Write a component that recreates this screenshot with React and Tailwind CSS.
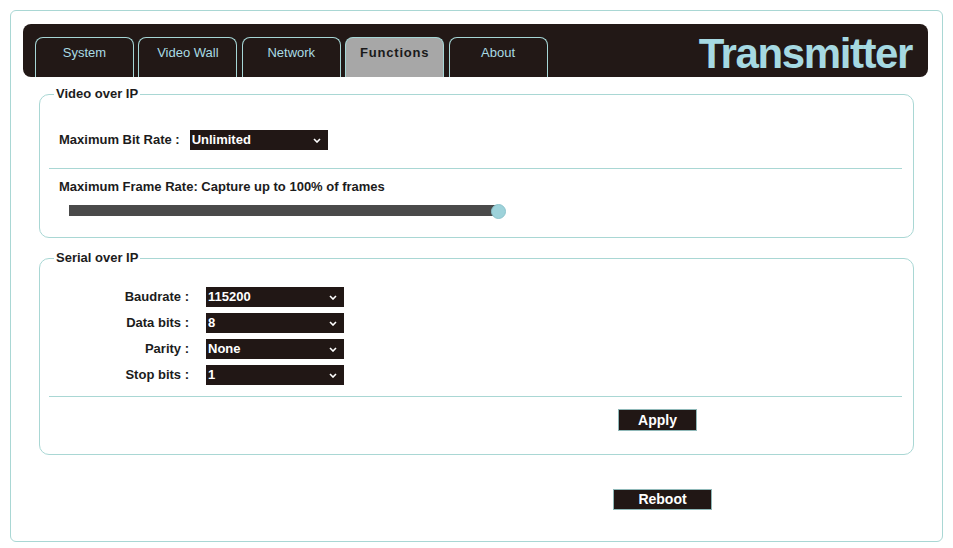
import { useState } from "react";

const tabs = ["System", "Video Wall", "Network", "Functions", "About"];

// small white chevron drawn over the native select
function Chevron() {
  return (
    <svg
      className="pointer-events-none absolute right-[7px] top-[8px]"
      width="8"
      height="5"
      viewBox="0 0 8 5"
    >
      <path d="M1 1 L4 4 L7 1" fill="none" stroke="#ffffff" strokeWidth="1.6" />
    </svg>
  );
}

function DarkSelect({ value, options, onChange }) {
  return (
    <div className="relative h-[20px] w-[138px]">
      <select
        value={value}
        onChange={(e) => onChange(e.target.value)}
        className="block h-[20px] w-[138px] appearance-none bg-[#211715] pl-[2px] text-[13px] font-bold leading-[20px] text-white outline-none"
      >
        {options.map((o) => (
          <option key={o} value={o}>
            {o}
          </option>
        ))}
      </select>
      <Chevron />
    </div>
  );
}

export default function App() {
  const [active, setActive] = useState("Functions");
  const [bitRate, setBitRate] = useState("Unlimited");
  const [baud, setBaud] = useState("115200");
  const [dataBits, setDataBits] = useState("8");
  const [parity, setParity] = useState("None");
  const [stopBits, setStopBits] = useState("1");

  const serialRows = [
    ["Baudrate :", baud, setBaud, ["9600", "19200", "38400", "57600", "115200"]],
    ["Data bits :", dataBits, setDataBits, ["5", "6", "7", "8"]],
    ["Parity :", parity, setParity, ["None", "Odd", "Even"]],
    ["Stop bits :", stopBits, setStopBits, ["1", "2"]],
  ];

  return (
    <div
      className="min-h-[548px] w-[953px] bg-white pt-[10px] text-[#1c1c1c]"
      style={{ fontFamily: '"Liberation Sans", Arial, sans-serif' }}
    >
      <div className="ml-[10px] h-[532px] w-[933px] rounded-[6px] border border-[#a9d7d4] px-[12px] pt-[13px]">
        {/* ======== HEADER / TABS ======== */}
        <div className="flex h-[53px] w-[905px] items-end justify-between rounded-[8px] bg-[#221816] pl-[12px] pr-[16px]">
          <div className="flex gap-[4.4px]">
            {tabs.map((t) => (
              <button
                key={t}
                onClick={() => setActive(t)}
                className={`flex h-[40px] w-[99px] justify-center rounded-t-[8px] border border-b-0 border-[#a6d6d6] pt-[7px] text-[13px] leading-[16px] ${
                  active === t
                    ? "bg-[#a7a7a7] font-bold tracking-[0.8px] text-[#1a1a1a]"
                    : "text-[#a9dbe4]"
                }`}
              >
                {t}
              </button>
            ))}
          </div>
          <div className="mb-auto mt-[9px] text-[42px] font-bold leading-[42px] tracking-[-1.4px] text-[#a6d9e2]">
            Transmitter
          </div>
        </div>

        {/* ======== VIDEO OVER IP ======== */}
        <fieldset className="ml-[16px] mt-[9px] w-[875px] rounded-[10px] border border-[#a9d7d4] pb-[18px] pl-[9px] pr-[11px]">
          <legend className="ml-[5px] px-[2px] text-[13px] font-bold leading-[16px]">
            Video over IP
          </legend>
          <div className="ml-[10px] mt-[28px] flex h-[20px] items-center">
            <span className="text-[13px] font-bold">Maximum Bit Rate :</span>
            <div className="ml-[10px]">
              <DarkSelect
                value={bitRate}
                onChange={setBitRate}
                options={["Unlimited", "20 Mbps", "10 Mbps", "5 Mbps", "2 Mbps"]}
              />
            </div>
          </div>
          <div className="mt-[18px] h-px w-full bg-[#a9d7d4]" />
          <div className="ml-[10px] mt-[10px] text-[13px] font-bold leading-[16px]">
            Maximum Frame Rate: Capture up to 100% of frames
          </div>
          <div className="relative ml-[20px] mt-[10px] h-[14px] w-[436px]">
            <div className="mt-[1px] h-[11px] w-[430px] bg-[#4a4a4a]" />
            <div className="absolute left-[422px] top-[-1px] h-[15px] w-[15px] rounded-full border border-[#8cc4cc] bg-[#9dd2da]" />
          </div>
        </fieldset>

        {/* ======== SERIAL OVER IP ======== */}
        <fieldset className="ml-[16px] mt-[12px] w-[875px] rounded-[10px] border border-[#a9d7d4] pb-[23px] pl-[9px] pr-[11px]">
          <legend className="ml-[5px] px-[2px] text-[13px] font-bold leading-[16px]">
            Serial over IP
          </legend>
          <div className="mt-[21px] flex flex-col gap-[6px]">
            {serialRows.map(([label, val, set, opts]) => (
              <div key={label} className="flex h-[20px] items-center">
                <span className="w-[140px] text-right text-[13px] font-bold">{label}</span>
                <div className="ml-[17px]">
                  <DarkSelect value={val} onChange={set} options={opts} />
                </div>
              </div>
            ))}
          </div>
          <div className="mt-[11px] h-px w-full bg-[#a9d7d4]" />
          <button className="ml-[569px] mt-[12px] flex h-[22px] w-[79px] items-center justify-center border border-[#8fb8b8] bg-[#211715] text-[14px] font-bold text-white">
            Apply
          </button>
        </fieldset>

        <button className="ml-[590px] mt-[34px] flex h-[21px] w-[99px] items-center justify-center border border-[#8fb8b8] bg-[#211715] text-[14px] font-bold text-white">
          Reboot
        </button>
      </div>
    </div>
  );
}
